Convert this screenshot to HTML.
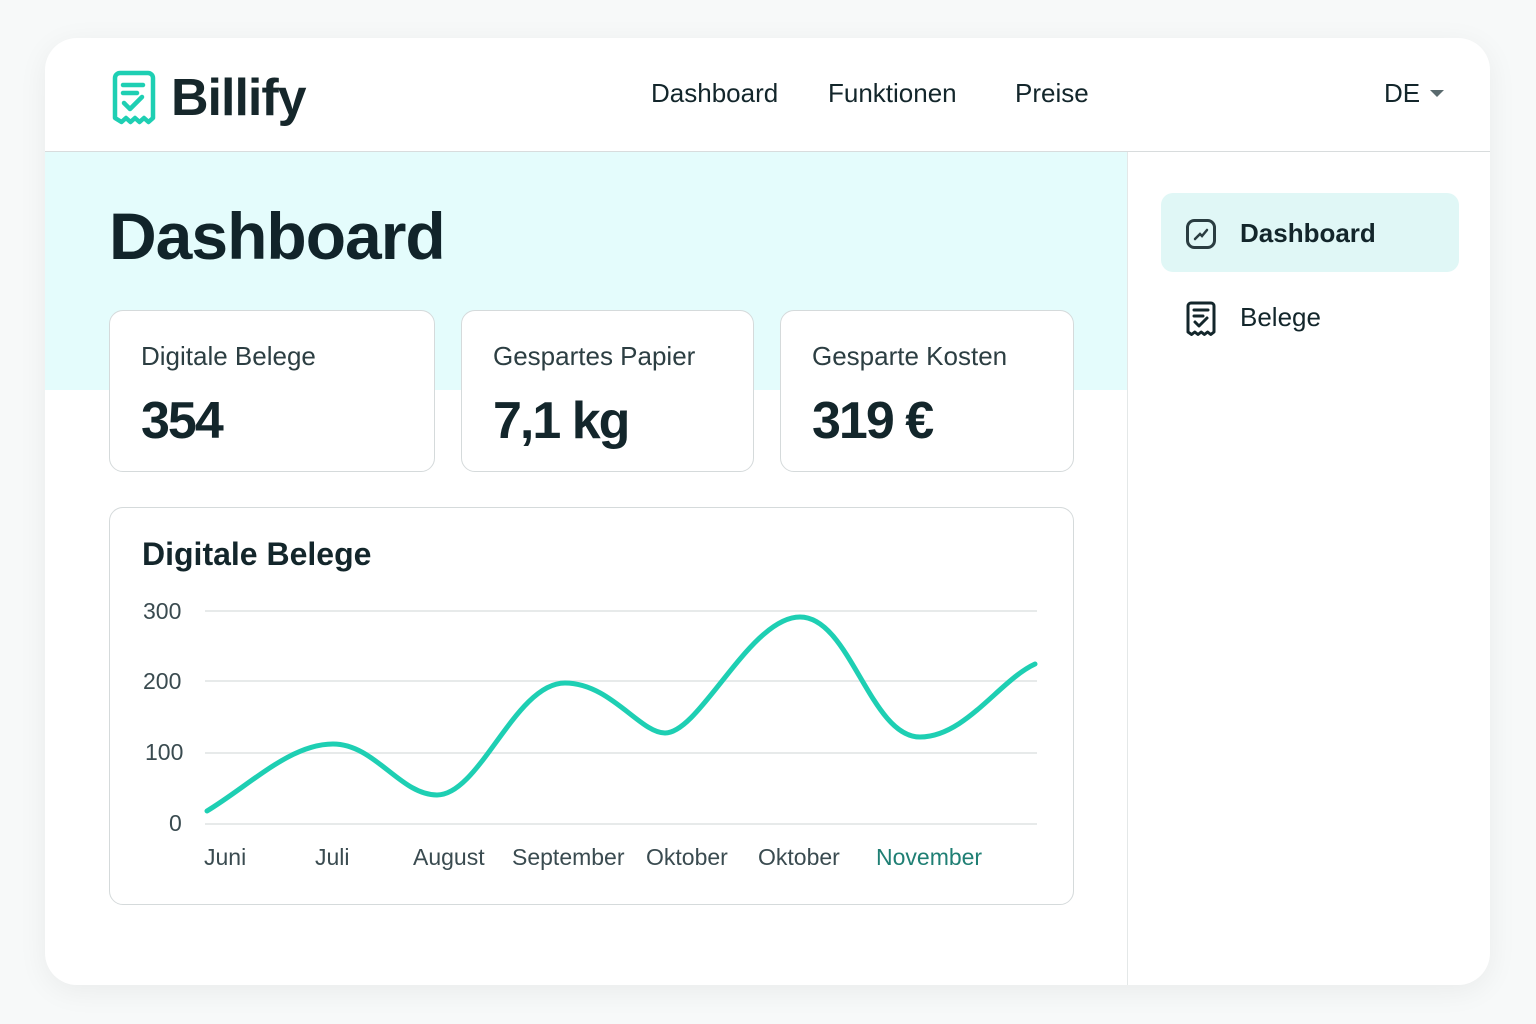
<!DOCTYPE html>
<html><head><meta charset="utf-8"><style>
*{margin:0;padding:0;box-sizing:border-box}
body{width:1536px;height:1024px;background:#f7f9f9;font-family:"Liberation Sans",sans-serif;color:#13262b;position:relative;overflow:hidden}
.card{position:absolute;left:45px;top:38px;width:1445px;height:947px;background:#fff;border-radius:32px;box-shadow:0 6px 30px rgba(0,0,0,.06);overflow:hidden}
.a{position:absolute}
.nav{font-size:26px;color:#13262b;top:80px}
.band{left:0;top:114px;width:1082px;height:238px;background:#e4fcfc}
.hdrline{left:0;top:113px;width:1445px;height:1px;background:#d8dcdd}
.vline{left:1082px;top:114px;width:1px;height:833px;background:#e4e8e8}
.box{position:absolute;background:#fff;border:1px solid #d5dadb;border-radius:14px}
.lbl{font-size:26px;color:#2c3e42;position:absolute;left:31px;top:30px}
.val{font-size:52px;font-weight:bold;position:absolute;left:31px;top:80px;letter-spacing:-2px}
.ax{font-size:23px;color:#3a4b50;position:absolute}
</style></head><body>
<div class="card">
  <div class="a band"></div>
  <div class="a hdrline"></div>
  <div class="a vline"></div>
  <svg class="a" style="left:66px;top:32px" width="46" height="56" viewBox="0 0 46 56">
    <path d="M4 48 V8 a5 5 0 0 1 5-5 h28 a5 5 0 0 1 5 5 V48 l-4.5 4 -4.5-4 -4.5 4 -4.5-4 -4.5 4 -4.5-4 -4.5 4 z" fill="none" stroke="#1ecfb3" stroke-width="4.5" stroke-linejoin="round"/>
    <path d="M12 15h20M12 23h14M13 33l6 6 12-12" fill="none" stroke="#1ecfb3" stroke-width="4.5" stroke-linecap="round" stroke-linejoin="round"/>
  </svg>
  <div class="a" style="left:126px;top:30px;font-size:52px;font-weight:bold;color:#16272b;letter-spacing:-1px">Billify</div>
  <div class="a nav" style="left:606px;top:40px">Dashboard</div>
  <div class="a nav" style="left:783px;top:40px">Funktionen</div>
  <div class="a nav" style="left:970px;top:40px">Preise</div>
  <div class="a nav" style="left:1339px;top:40px">DE</div>
  <svg class="a" style="left:1385px;top:52px" width="14" height="8"><path d="M0 0h14L7 7z" fill="#5a6a6e"/></svg>

  <div class="a" style="left:64px;top:160px;font-size:66px;font-weight:bold;letter-spacing:-1px;color:#11242a">Dashboard</div>

  <div class="box" style="left:64px;top:272px;width:326px;height:162px"><div class="lbl">Digitale Belege</div><div class="val">354</div></div>
  <div class="box" style="left:416px;top:272px;width:293px;height:162px"><div class="lbl">Gespartes Papier</div><div class="val">7,1 kg</div></div>
  <div class="box" style="left:735px;top:272px;width:294px;height:162px"><div class="lbl">Gesparte Kosten</div><div class="val">319 €</div></div>

  <div class="box" style="left:64px;top:469px;width:965px;height:398px">
    <div style="position:absolute;left:32px;top:28px;font-size:32px;font-weight:bold;color:#13262b">Digitale Belege</div>
  </div>
  <div class="ax" style="left:98px;top:560px">300</div>
  <div class="ax" style="left:98px;top:630px">200</div>
  <div class="ax" style="left:100px;top:701px">100</div>
  <div class="ax" style="left:124px;top:772px">0</div>
  <svg class="a" style="left:0;top:0" width="1082" height="947">
    <g stroke="#dfe3e4" stroke-width="1.5">
      <line x1="160" y1="573" x2="992" y2="573"/><line x1="160" y1="643" x2="992" y2="643"/>
      <line x1="160" y1="715" x2="992" y2="715"/><line x1="160" y1="786" x2="992" y2="786"/>
    </g>
    <path transform="translate(-45,-38)" d="M207,811 C250,785 290,744 333,744 C375,744 400,795 437,795 C480,795 515,683 565,683 C610,683 640,733 665,733 C700,733 750,617 800,617 C850,617 870,737 920,737 C965,737 1000,680 1035,664" fill="none" stroke="#1ecfb3" stroke-width="5" stroke-linecap="round"/>
  </svg>
  <div class="ax" style="left:159px;top:806px">Juni</div>
  <div class="ax" style="left:270px;top:806px">Juli</div>
  <div class="ax" style="left:368px;top:806px">August</div>
  <div class="ax" style="left:467px;top:806px">September</div>
  <div class="ax" style="left:601px;top:806px">Oktober</div>
  <div class="ax" style="left:713px;top:806px">Oktober</div>
  <div class="ax" style="left:831px;top:806px;color:#1f7f74">November</div>

  <div class="a" style="left:1116px;top:155px;width:298px;height:79px;background:#e0f7f6;border-radius:12px"></div>
  <svg class="a" style="left:1140px;top:180px" width="32" height="32" viewBox="0 0 32 32">
    <rect x="2.5" y="2.5" width="27" height="27" rx="7" fill="none" stroke="#2a3d41" stroke-width="3"/>
    <path d="M10 21l5-5 2 2 5-6" fill="none" stroke="#2a3d41" stroke-width="2.5" stroke-linecap="round"/>
  </svg>
  <div class="a" style="left:1195px;top:180px;font-size:26px;font-weight:bold;color:#13262b">Dashboard</div>
  <svg class="a" style="left:1140px;top:263px" width="32" height="36" viewBox="0 0 32 36">
    <path d="M3 31V5a3 3 0 0 1 3-3h20a3 3 0 0 1 3 3v26l-3.2 2.5-3.2-2.5-3.2 2.5-3.2-2.5-3.2 2.5-3.2-2.5-3.2 2.5z" fill="none" stroke="#13262b" stroke-width="3" stroke-linejoin="round"/>
    <path d="M9 9h14M9 15h9M10 21l4 4 8-8" fill="none" stroke="#13262b" stroke-width="3" stroke-linecap="round" stroke-linejoin="round"/>
  </svg>
  <div class="a" style="left:1195px;top:264px;font-size:26px;color:#13262b">Belege</div>
</div>
</body></html>
